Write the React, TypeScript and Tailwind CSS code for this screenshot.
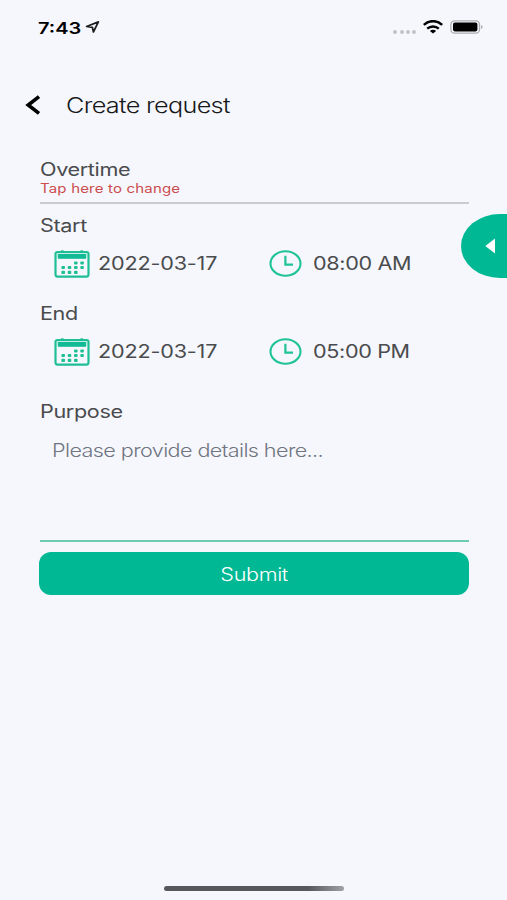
import type { ReactNode } from 'react';

const calendarDays = [[20, 11.5], [26.3, 11.5], [7.4, 16], [13.7, 16], [20, 16], [26.3, 16], [7.4, 20.8], [13.7, 20.8], [20, 20.8]];

const CalendarIcon = () => (
    <svg viewBox="0 0 36 28" className="w-9 h-7 shrink-0" fill="none">
        <rect x="1.5" y="2" width="33" height="24.6" rx="2" stroke="#1fbf95" strokeWidth="2.2" />
        <path d="M4 3.8h28v5H4z" fill="#12bb95" />
        <path d="M7 .2h2.6v2H7zM26.5 .2h2.6v2h-2.6z" fill="#1fbf95" />
        <path d="M3.6 3.4v4.4M32.4 3.4v4.4" stroke="#a5e6d5" strokeWidth="1" />
        <g fill="#1fbf95">
            {calendarDays.map(([x, y]) => (
                <rect key={`${x}-${y}`} x={x} y={y} width="3.6" height="3.1" rx="1" />
            ))}
        </g>
    </svg>
);

const ClockIcon = () => (
    <svg viewBox="0 0 34 28" className="w-[34px] h-7 shrink-0" fill="none" stroke="#20c397">
        <ellipse cx="16.5" cy="13.5" rx="15" ry="12.2" strokeWidth="2.1" />
        <path d="M16.4 5.8v8.9h7.6" strokeWidth="2.2" />
    </svg>
);

const StatusBar = () => (
    <div className="h-[55px] pl-[38px] pr-[23px] flex items-center justify-between">
        <div className="flex items-center">
            <span className="w-[47px]">
                <span className="inline-block origin-left scale-x-[1.25] text-base leading-5 font-semibold text-black">7:43</span>
            </span>
            <svg viewBox="0 0 15 12" className="w-[15px] h-3 -mt-px" fill="none" stroke="#1c1c1c" strokeWidth="1.7" strokeLinejoin="round">
                <path d="M13.4 .9L1.6 5.5l5.8.8 1 4.7z" />
            </svg>
        </div>
        <div className="flex items-center">
            <div className="flex gap-[2.2px] mr-[7px] mt-2">
                {[0, 1, 2, 3].map((dot) => (
                    <span key={dot} className="w-1 h-1 rounded-full bg-[#c2c3c8]" />
                ))}
            </div>
            <svg viewBox="0 0 20 14" className="w-5 h-3.5 mr-[7px] -mt-[2px]" fill="none" stroke="#000">
                <path d="M.8 4.9C6-.1 14-.1 19.2 4.9" strokeWidth="2.5" />
                <path d="M4.2 8.7c3.4-3 8.2-3 11.6 0" strokeWidth="2.4" />
                <path d="M10 13.6L6.9 11c1.8-1.6 4.4-1.6 6.2 0z" fill="#000" stroke="none" />
            </svg>
            <svg viewBox="0 0 34 14" className="w-[34px] h-3.5 -mt-px" fill="none">
                <rect x=".9" y=".8" width="28.6" height="12.4" rx="3.6" stroke="#aeafb3" strokeWidth="1.3" />
                <rect x="3" y="2.6" width="24.4" height="8.8" rx="1.8" fill="#000" />
                <path d="M31.2 4.9c1.8.7 1.8 3.5 0 4.2z" fill="#9fa0a4" />
            </svg>
        </div>
    </div>
);

const Label = ({ children }: { children: ReactNode }) => (
    <p className="w-fit origin-left scale-x-[1.2] text-lg leading-5 tracking-[-0.3px] text-[#4a4b4e]">{children}</p>
);

const DateTimeRow = ({ date, time }: { date: string; time: string }) => (
    <div className="h-7 pl-3.5 flex items-center">
        <CalendarIcon />
        <div className="w-[179px] pl-2">
            <span className="inline-block origin-left scale-x-[1.2] text-lg leading-7 tracking-[-0.15px] text-[#4a4b4e]">{date}</span>
        </div>
        <ClockIcon />
        <span className="ml-2.5 inline-block origin-left scale-x-[1.2] text-lg leading-7 tracking-[-0.3px] text-[#4a4b4e]">{time}</span>
    </div>
);

export default function App() {
    return (
        <div className="relative w-[507px] h-[900px] overflow-hidden bg-[#f5f7fc] font-['Inter',sans-serif] flex flex-col whitespace-nowrap">
            <StatusBar />

            <header className="mt-9 h-7 pl-[25px] flex items-center">
                <svg viewBox="0 0 16 20" className="w-4 h-5" fill="none" stroke="#000" strokeWidth="3.6">
                    <path d="M14 1.6L3.2 10 14 18.4" />
                </svg>
                <h1 className="ml-[25px] mt-0.5 origin-left scale-x-[1.2] text-[21px] leading-7 tracking-[-0.55px] font-light text-[#17181a]">Create request</h1>
            </header>

            <main className="mt-10 pl-10 pr-[38px] flex flex-col">
                <div className="h-[45px] pt-px border-b-2 border-[#c9cbd0]">
                    <Label>Overtime</Label>
                    <p className="w-fit origin-left scale-x-[1.2] text-[12.5px] leading-[18px] tracking-[0.15px] text-[#cc4c4f]">Tap here to change</p>
                </div>

                <div className="mt-3">
                    <Label>Start</Label>
                    <div className="mt-3.5">
                        <DateTimeRow date="2022-03-17" time="08:00 AM" />
                    </div>
                </div>

                <div className="mt-[26px]">
                    <Label>End</Label>
                    <div className="mt-3.5">
                        <DateTimeRow date="2022-03-17" time="05:00 PM" />
                    </div>
                </div>

                <div className="mt-9 h-[140px] border-b-2 border-[#6ccdb3]">
                    <Label>Purpose</Label>
                    <p className="mt-[19px] ml-3 w-fit origin-left scale-x-[1.2] text-lg leading-5 tracking-[-0.5px] font-light text-[#707581]">Please provide details here...</p>
                </div>

                <button className="mt-2.5 -ml-px h-[43px] pt-0.5 rounded-xl bg-[#00b894] flex items-center justify-center">
                    <span className="scale-x-[1.2] text-lg tracking-[-0.3px] font-light text-white">Submit</span>
                </button>
            </main>

            <div className="mt-auto mb-[9px] ml-[164px] w-[180px] h-[5px] rounded-full bg-linear-to-r from-[#57585b] from-80% to-[#a0a1a5]" />

            <button className="absolute right-0 top-[214px] w-[46px] h-16 rounded-l-[39px_32px] bg-[#00b894]">
                <svg viewBox="0 0 10 16" className="w-2.5 h-4 ml-6" fill="#fff">
                    <path d="M10 .5v15L.3 8z" />
                </svg>
            </button>
        </div>
    );
}
